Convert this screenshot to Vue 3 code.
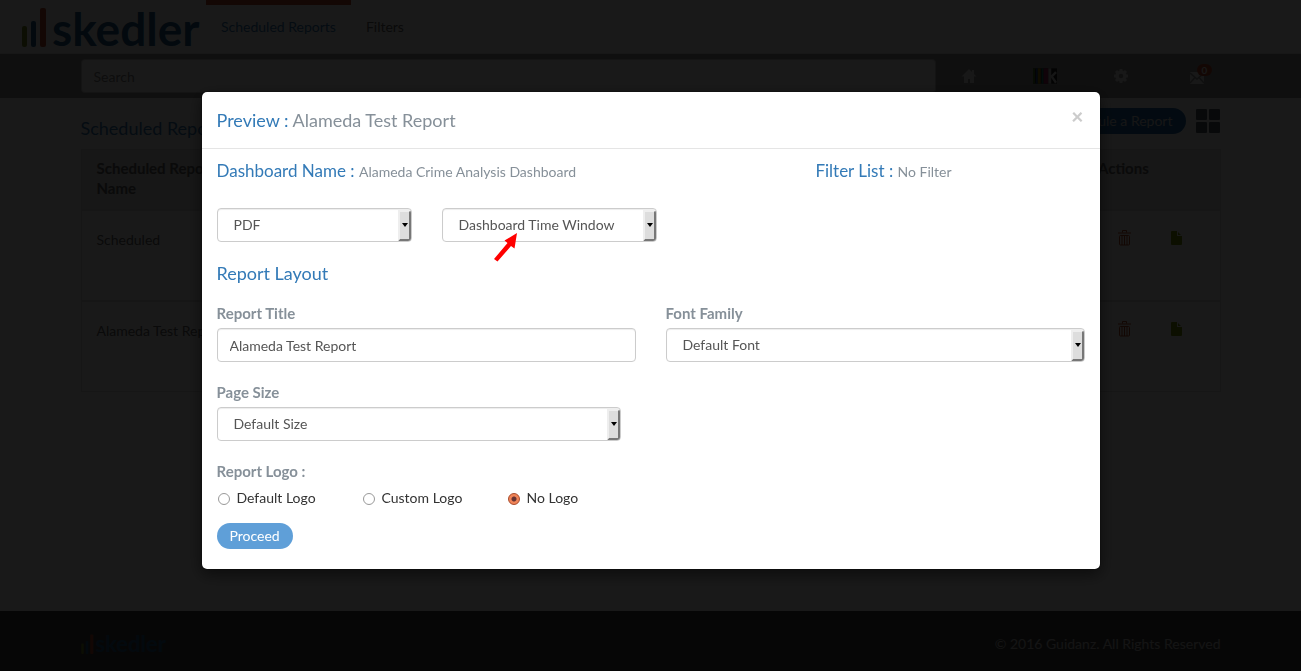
<script setup>
import { ref } from 'vue'

const search = ref('')
const format = ref('PDF')
const timeWindow = ref('Dashboard Time Window')
const title = ref('Alameda Test Report')
const font = ref('Default Font')
const pageSize = ref('Default Size')
const logo = ref('No Logo')
const logos = ['Default Logo', 'Custom Logo', 'No Logo']
const reports = ['Scheduled', 'Alameda Test Report']
</script>

<template>
  <div class="page">
    <header class="navbar">
      <a class="brand" href="#">
        <svg class="bars" viewBox="0 0 25 40" aria-hidden="true">
          <rect class="green" x="0" y="19" width="5" height="21" rx="2" />
          <rect class="blue" x="9" y="14" width="5" height="26" rx="2" />
          <rect class="orange" x="18" y="1" width="6" height="39" rx="2" />
        </svg>
        <span>skedler</span>
      </a>
      <nav class="tabs">
        <a class="tab active" href="#">Scheduled Reports</a>
        <a class="tab" href="#">Filters</a>
      </nav>
    </header>

    <div class="toolbar">
      <div class="container tools">
        <input v-model="search" class="search" type="text" placeholder="Search" aria-label="Search" />
        <a class="tool" href="#" aria-label="Home">
          <svg width="16" height="16" viewBox="0 0 16 16"><path fill="currentColor" d="M8 1 .5 8.5H3V15h4v-4h2v4h4V8.500h2.500L13 6V2h-2v2z" /></svg>
        </a>
        <a class="tool" href="#" aria-label="Kibana">
          <svg width="25" height="16" viewBox="0 0 25 16">
            <rect width="25" height="16" fill="#222" />
            <rect width="2" height="16" fill="#4a7a20" />
            <rect x="3" width="2" height="16" fill="#204a90" />
            <rect x="5" width="3" height="16" fill="#a08000" />
            <rect x="9" width="2" height="16" fill="#108070" />
            <rect x="11" width="5" height="16" fill="#a0205a" />
            <rect x="16" width="3" height="16" fill="#ccc" />
            <path d="m24 4-4.500 4.500L24 15" fill="none" stroke="#ddd" stroke-width="2.500" />
          </svg>
        </a>
        <a class="tool" href="#" aria-label="Settings">
          <svg width="14" height="14" viewBox="0 0 14 14">
            <circle cx="7" cy="7" r="4" fill="none" stroke="currentColor" stroke-width="3.500" />
            <path d="M7 0v2.500M7 11.500V14M0 7h2.500M11.500 7H14M2 2l2 2M10 10l2 2M12 2l-2 2M4 10l-2 2" stroke="currentColor" stroke-width="3" />
          </svg>
        </a>
        <a class="tool" href="#" aria-label="Messages">
          <svg class="mail" width="14" height="12" viewBox="0 0 14 12">
            <rect width="14" height="12" fill="currentColor" />
            <path d="m0 1 7 6 7-6M0 11l5-5.500M14 11 9 5.500" fill="none" stroke="#999" stroke-width="1.500" />
          </svg>
          <span class="badge">0</span>
        </a>
      </div>
    </div>

    <main class="container main">
      <div class="heading">
        <h1>Scheduled Reports</h1>
        <button class="pill dark" type="button">Schedule a Report</button>
        <button class="grid-button" type="button" aria-label="Grid view"><i></i><i></i><i></i><i></i></button>
      </div>
      <table class="reports">
        <thead>
          <tr>
            <th>Scheduled Report<br />Name</th>
            <th class="actions">Actions</th>
          </tr>
        </thead>
        <tbody>
          <tr v-for="name in reports" :key="name">
            <td>{{ name }}</td>
            <td>
              <div class="row-icons">
                <svg width="13" height="16" viewBox="0 0 13 16">
                  <path d="M4.500 2.500v-2h4v2M0 3h13" fill="none" stroke="#b84820" />
                  <rect x="1.500" y="5.500" width="10" height="9.500" rx="1" fill="none" stroke="#b84820" />
                  <path d="M4 6v9M6.500 6v9M9 6v9" stroke="#b84820" />
                </svg>
                <svg width="11" height="14" viewBox="0 0 11 14">
                  <path d="M1 0h5v5h5v8q0 1-1 1H1q-1 0-1-1V1q0-1 1-1zM7 1l3 3H7z" fill="#7c9a00" />
                </svg>
              </div>
            </td>
          </tr>
        </tbody>
      </table>
    </main>

    <footer class="footer">
      <div class="container foot">
        <a class="brand small" href="#">
          <svg class="bars" viewBox="0 0 25 40" aria-hidden="true">
            <rect class="green" x="0" y="19" width="5" height="21" rx="2" />
            <rect class="blue" x="9" y="14" width="5" height="26" rx="2" />
            <rect class="orange" x="18" y="1" width="6" height="39" rx="2" />
          </svg>
          <span>skedler</span>
        </a>
        <span>© 2016 Guidanz. All Rights Reserved</span>
      </div>
    </footer>

    <div class="backdrop">
      <section class="modal" role="dialog" aria-labelledby="dialog-title">
        <header class="modal-header">
          <h2 id="dialog-title">Preview : <span>Alameda Test Report</span></h2>
          <button class="close" type="button" aria-label="Close">×</button>
        </header>
        <form class="modal-body" @submit.prevent>
          <div class="summary">
            <p>Dashboard Name : <small>Alameda Crime Analysis Dashboard</small></p>
            <p>Filter List : <small>No Filter</small></p>
          </div>
          <div class="choices">
            <div class="select format">
              <select v-model="format" aria-label="Format"><option>PDF</option></select>
            </div>
            <div class="select window">
              <select v-model="timeWindow" aria-label="Time window"><option>Dashboard Time Window</option></select>
              <svg class="pointer" width="24" height="29" viewBox="0 0 24 29" aria-hidden="true">
                <path d="M23 0 10.500 7.500l3 2.500L0 26l3.500 2.500L17 13l3.500 2.500z" fill="#f00" />
              </svg>
            </div>
          </div>
          <h3>Report Layout</h3>
          <div class="fields">
            <div>
              <label for="title">Report Title</label>
              <input id="title" v-model="title" class="text" type="text" />
            </div>
            <div>
              <label for="font">Font Family</label>
              <div class="select">
                <select id="font" v-model="font"><option>Default Font</option></select>
              </div>
            </div>
            <div>
              <label for="size">Page Size</label>
              <div class="select size">
                <select id="size" v-model="pageSize"><option>Default Size</option></select>
              </div>
            </div>
          </div>
          <fieldset>
            <legend>Report Logo :</legend>
            <div class="radios">
              <label v-for="item in logos" :key="item">
                <input v-model="logo" type="radio" name="logo" :value="item" />{{ item }}
              </label>
            </div>
          </fieldset>
          <button class="pill" type="submit">Proceed</button>
        </form>
      </section>
    </div>
  </div>
</template>

<style>
body {
  margin: 0;
}
</style>

<style scoped>
*,
*::before,
*::after {
  box-sizing: border-box;
}
.page {
  display: flex;
  flex-direction: column;
  min-height: 100vh;
  background: #fff;
  color: #333;
  font: 14px/20px Lato, sans-serif;
}
a {
  color: inherit;
  text-decoration: none;
}
button,
input,
select {
  font: inherit;
}
h1,
h2,
h3,
p {
  margin: 0;
  font-weight: 400;
}
.container {
  width: 100%;
  max-width: 1140px;
  margin: 0 auto;
}
.navbar {
  display: flex;
  height: 54px;
  padding-left: 22px;
  border-bottom: 1px solid #e7e7e7;
}
.brand {
  display: flex;
  align-items: flex-start;
  gap: 5px;
  width: 184px;
  padding-top: 7px;
  color: #205f90;
  font-size: 46px;
  font-weight: 700;
  line-height: 44px;
}
.bars {
  width: 25px;
  height: 40px;
}
.green {
  fill: #7a9020;
}
.blue {
  fill: #205f90;
}
.orange {
  fill: #c04a2a;
}
.brand.small {
  gap: 2px;
  width: auto;
  padding: 0;
  font-size: 22px;
  line-height: 20px;
}
.small .bars {
  width: 13px;
  height: 20px;
}
.tabs {
  display: flex;
}
.tab {
  padding: 12px 15px;
  border-top: 5px solid transparent;
  color: #666;
}
.tab.active {
  border-color: #c04a2a;
  color: #337ab7;
}
.toolbar {
  padding: 5px 0;
  background: #999;
}
.tools {
  display: flex;
  align-items: center;
  gap: 52px;
}
.search {
  width: 75%;
  height: 34px;
  margin-right: -31px;
  padding: 6px 12px;
  border: 1px solid #ccc;
  border-radius: 4px;
  background: #fff;
}
.search::placeholder {
  color: #888;
}
.tool {
  position: relative;
  display: flex;
  justify-content: center;
  width: 24px;
  color: #eee;
}
.mail {
  margin-top: 3px;
}
.badge {
  position: absolute;
  top: -5px;
  left: 12px;
  padding: 0 5px;
  border-radius: 8px;
  background: #c04a2a;
  font-size: 10px;
  font-weight: 700;
  line-height: 12px;
}
.main {
  flex: 1;
  padding-top: 10px;
}
.heading {
  display: flex;
  align-items: center;
  gap: 10px;
  margin-bottom: 15px;
  padding-right: 1px;
}
h1 {
  flex: 1;
  padding-top: 14px;
  color: #337ab7;
  font-size: 18px;
  line-height: 12px;
}
.pill {
  height: 26px;
  padding: 0 13px;
  border: 0;
  border-radius: 13px;
  background: #5f9fd8;
  color: #fff;
}
.pill.dark {
  background: #206aac;
  color: #ddd;
}
.grid-button {
  display: grid;
  grid-template-columns: 11px 11px;
  grid-auto-rows: 11px;
  gap: 2px;
  padding: 0;
  border: 0;
  background: none;
}
.grid-button i {
  border-radius: 1px;
  background: #506068;
}
.reports {
  width: 100%;
  border: 1px solid #ddd;
  border-collapse: collapse;
  color: #666;
}
th {
  height: 60px;
  padding: 8px 15px;
  background: #e4e4e4;
  font-size: 15px;
  text-align: left;
  vertical-align: top;
}
.actions {
  width: 137px;
}
td {
  height: 91px;
  padding: 19px 15px;
  border-top: 2px solid #ddd;
  vertical-align: top;
}
.row-icons {
  display: flex;
  align-items: center;
  gap: 40px;
  padding-left: 20px;
}
.footer {
  padding: 23px 0 17px;
  background: #444;
}
.foot {
  display: flex;
  align-items: center;
  justify-content: space-between;
  color: #ccc;
}
.backdrop {
  position: fixed;
  inset: 0;
  padding: 91px 15px 30px;
  overflow: auto;
  background: rgba(0, 0, 0, 0.9);
}
.modal {
  max-width: 900px;
  margin: 0 auto;
  border: 1px solid rgba(0, 0, 0, 0.2);
  border-radius: 6px;
  background: #fff;
  background-clip: padding-box;
  box-shadow: 0 5px 15px rgba(0, 0, 0, 0.5);
}
.modal-header {
  display: flex;
  justify-content: space-between;
  padding: 15px;
  border-bottom: 1px solid #e5e5e5;
}
h2 {
  color: #337ab7;
  font-size: 18px;
  line-height: 26px;
}
h2 span,
small {
  color: #869099;
}
.close {
  height: 18px;
  padding: 0 1px;
  border: 0;
  background: none;
  color: #ccc;
  font-size: 21px;
  font-weight: 900;
  line-height: 18px;
}
.modal-body {
  padding: 12px 15px 20px;
}
.summary {
  display: grid;
  grid-template-columns: 69% 31%;
  margin-bottom: 27px;
  color: #337ab7;
  font-size: 17px;
}
small {
  font-size: 14px;
  line-height: 14px;
}
.choices {
  display: flex;
  gap: 30px;
  margin-bottom: 21px;
}
.select {
  position: relative;
}
.select.format {
  width: 195px;
}
.select.window {
  width: 215px;
}
.select.size {
  margin-right: 15px;
}
.select::after {
  content: '';
  position: absolute;
  top: 2px;
  right: 1px;
  bottom: 1px;
  width: 13px;
  border: 2px solid #eee;
  border-right-color: #777;
  border-bottom-color: #777;
  border-radius: 0 3px 3px 0;
  background: #ddd;
  pointer-events: none;
}
.select::before {
  content: '';
  position: absolute;
  top: 15px;
  right: 4px;
  z-index: 1;
  border: 3px solid transparent;
  border-top: 4px solid #000;
  border-bottom: 0;
  pointer-events: none;
}
select,
.text {
  display: block;
  width: 100%;
  height: 34px;
  padding: 0 12px;
  border: 1px solid #ccc;
  border-radius: 4px;
  background: #fff;
  box-shadow: inset 0 1px 1px rgba(0, 0, 0, 0.075);
  color: #555;
  appearance: none;
}
select {
  padding: 0 16px;
}
.pointer {
  position: absolute;
  top: 25px;
  left: 52px;
  z-index: 1;
  pointer-events: none;
}
h3 {
  margin-bottom: 20px;
  color: #337ab7;
  font-size: 18px;
  line-height: 20px;
}
.fields {
  display: grid;
  grid-template-columns: 1fr 1fr;
  gap: 20px 30px;
  margin-bottom: 20px;
}
.fields label,
legend {
  display: block;
  margin-bottom: 5px;
  padding: 0;
  color: #869099;
  font-size: 15px;
  font-weight: 700;
}
fieldset {
  margin: 0 0 15px;
  padding: 0;
  border: 0;
}
.radios {
  display: flex;
  padding-top: 2px;
}
.radios label {
  display: flex;
  align-items: center;
  gap: 7px;
  width: 145px;
}
.radios input {
  width: 12px;
  height: 12px;
  margin: 2px 0 0 1px;
  border: 1px solid #999;
  border-radius: 50%;
  background: #fff;
  appearance: none;
}
.radios input:checked {
  border-color: #a84828;
  background: radial-gradient(circle, #633 2px, #f08458 3px);
}
</style>
